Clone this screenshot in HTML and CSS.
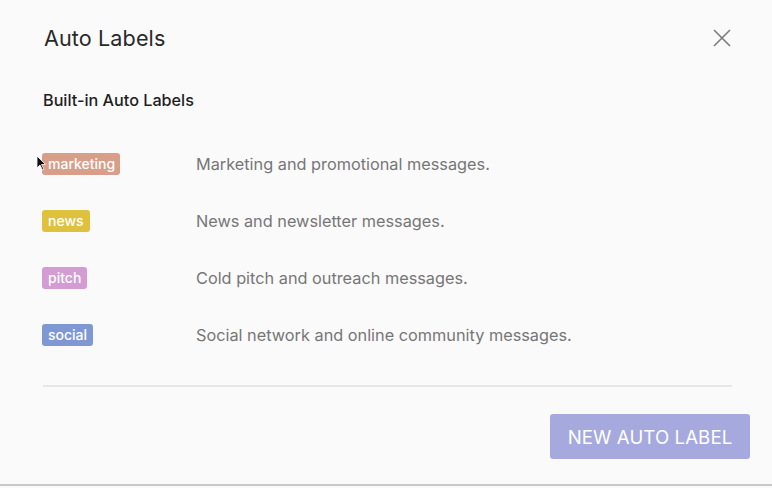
FILE: index.html
```html
<!DOCTYPE html>
<html>
<head>
<meta charset="utf-8">
<link rel="stylesheet" href="styles.css">
</head>
<body>
<div class="dialog">
  <header class="head">
    <h1 class="title">Auto Labels</h1>
    <button class="close" aria-label="Close">
      <svg width="20" height="20" viewBox="0 0 20 20"><path d="M2 2L18 18M18 2L2 18" stroke="#7a7a7a" stroke-width="1.6" fill="none"/></svg>
    </button>
  </header>
  <h2 class="sub">Built-in Auto Labels</h2>
  <ul class="rows">
    <li class="row"><span class="tag marketing">marketing</span><span class="desc">Marketing and promotional messages.</span>
      <svg class="cursor" width="10" height="16" viewBox="0 0 10 16"><path d="M1 1L1 13L4 10L6.5 15L8 14.3L5.6 9.5L9.5 9.5Z" fill="#111" stroke="#fff" stroke-width="0.8"/></svg>
    </li>
    <li class="row"><span class="tag news">news</span><span class="desc">News and newsletter messages.</span></li>
    <li class="row"><span class="tag pitch">pitch</span><span class="desc">Cold pitch and outreach messages.</span></li>
    <li class="row"><span class="tag social">social</span><span class="desc">Social network and online community messages.</span></li>
  </ul>
  <hr class="divider">
  <footer class="foot">
    <button class="new">NEW AUTO LABEL</button>
  </footer>
</div>
</body>
</html>
```
FILE: styles.css
```css
* { box-sizing: border-box; }
html, body { margin: 0; padding: 0; }
body {
  width: 772px;
  height: 488px;
  background: #fbfafb;
  font-family: Inter, "Noto Sans", sans-serif;
  overflow: hidden;
}
.dialog {
  height: 486px;
  border-bottom: 2px solid #c9c8cb;
  padding: 0 22px 0 42px;
  display: flex;
  flex-direction: column;
}
.head {
  display: flex;
  align-items: center;
  justify-content: space-between;
  height: 76px;
  padding-right: 18px;
}
.title {
  margin: 0 0 0 2px;
  font-size: 21.6px;
  font-weight: 400;
  color: #2a2a2a;
  letter-spacing: 0.1px;
}
.close {
  border: 0;
  background: none;
  padding: 0;
  width: 20px;
  height: 20px;
  cursor: pointer;
  display: block;
}
.close svg { display: block; }
.sub {
  margin: 14px 0 0 1px;
  font-size: 16.2px;
  font-weight: 500;
  color: #1f1f1f;
  line-height: 20px;
}
.rows {
  list-style: none;
  margin: 25px 0 0;
  padding: 0;
}
.row {
  position: relative;
  display: flex;
  align-items: center;
  height: 57px;
}
.tag {
  height: 22px;
  line-height: 22px;
  padding: 0 6px;
  border-radius: 3px;
  color: #fff;
  font-size: 14px;
  font-weight: 500;
}
.marketing { background: #d89e89; padding: 0 5px 0 6px; }
.news { background: #e0c13e; }
.pitch { background: #d39cd3; }
.social { background: #7f98d4; }
.desc {
  position: absolute;
  left: 154px;
  font-size: 16.3px;
  color: #767676;
}
.cursor {
  position: absolute;
  left: -6px;
  top: 20px;
}
.divider {
  border: 0;
  border-top: 2px solid #e7e6e8;
  margin: 22px 18px 0 1px;
}
.foot {
  display: flex;
  justify-content: flex-end;
  margin-top: 27px;
}
.new {
  width: 200px;
  height: 45px;
  border: 0;
  border-radius: 3px;
  background: #a6a9dd;
  color: #fff;
  font-family: Inter, "Noto Sans", sans-serif;
  font-size: 18.6px;
  font-weight: 400;
  letter-spacing: 0.1px;
}
```
